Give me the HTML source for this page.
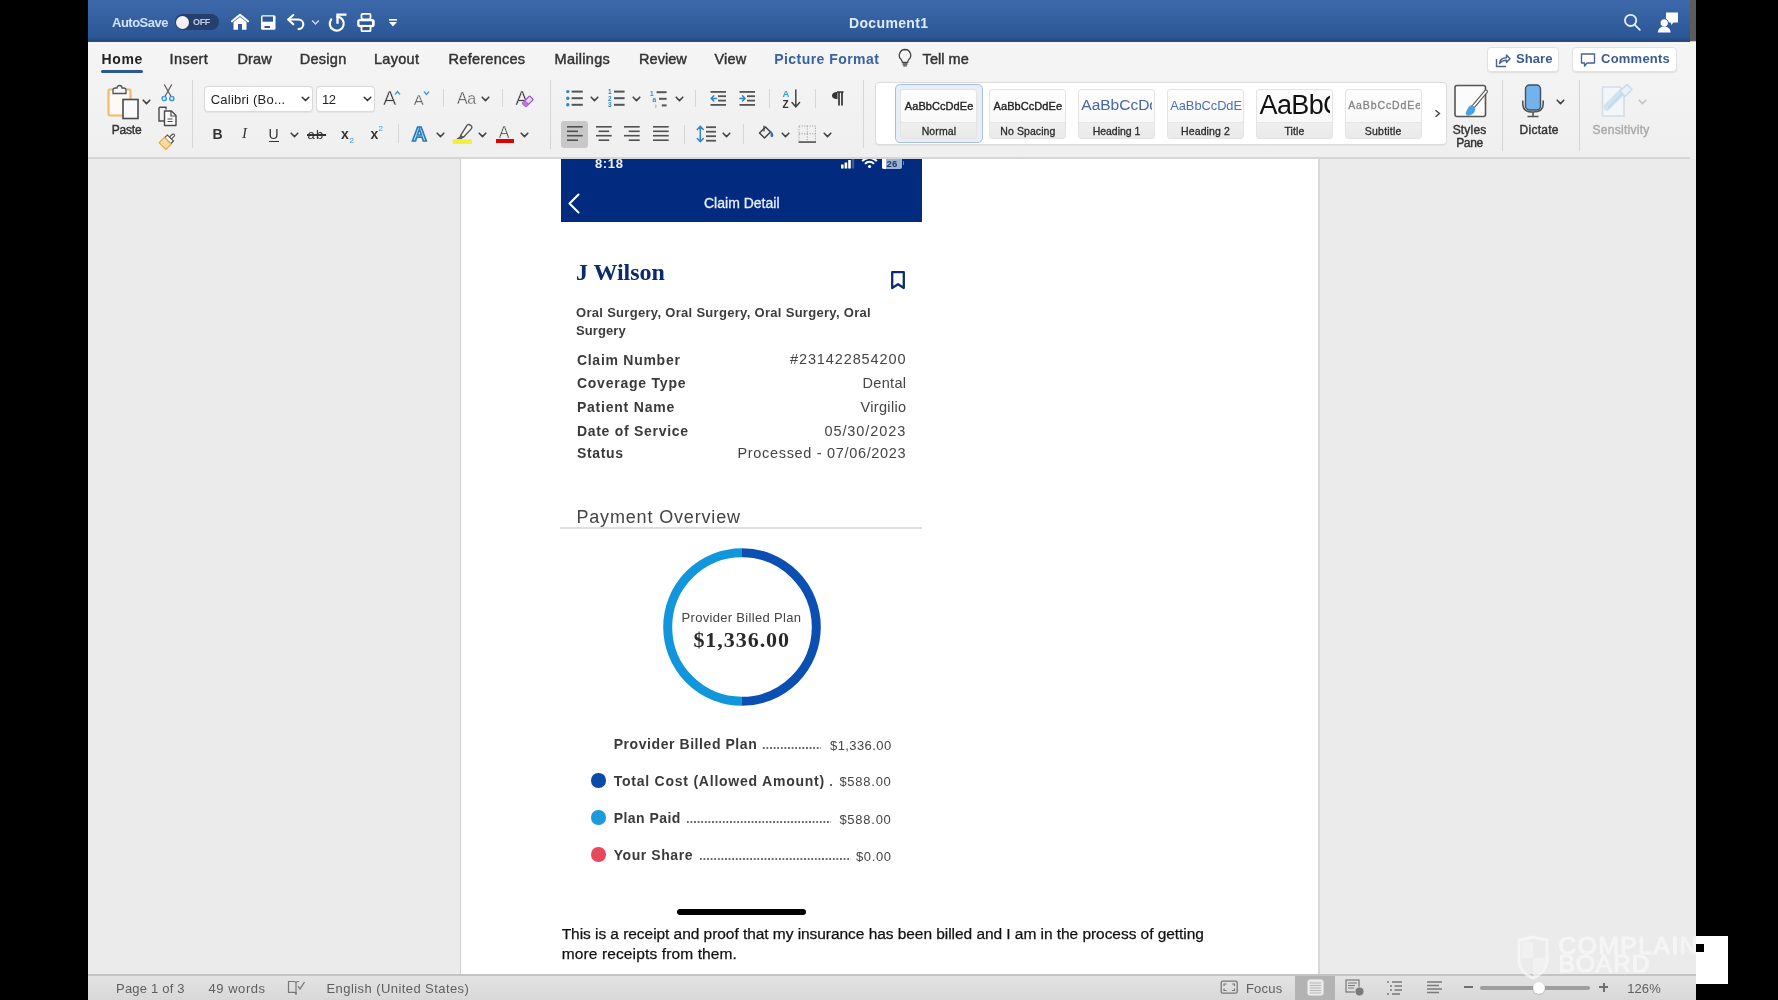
<!DOCTYPE html>
<html><head><meta charset="utf-8">
<style>
*{margin:0;padding:0;box-sizing:border-box}
html,body{width:1778px;height:1000px;overflow:hidden;background:#000;font-family:"Liberation Sans",sans-serif;position:relative}
.a{position:absolute}
.t{position:absolute;white-space:nowrap}
svg.a{overflow:visible}
</style></head>
<body><div id="root" style="position:absolute;left:0;top:0;width:1778px;height:1000px;will-change:transform">
<div class="a" style="left:88px;top:0px;width:1602px;height:42px;background:linear-gradient(#3d69ab,#2c5796 88%,#27487c 97%,#3b4a6a)"></div>
<div class="a" style="left:1690px;top:0px;width:6px;height:41px;background:#5c5c5c"></div>
<div class="a" style="left:1690px;top:41px;width:6px;height:8px;background:#cfc9c4"></div>
<div class="a" style="left:88px;top:42px;width:1608px;height:117px;background:linear-gradient(#f5f5f5,#efefef)"></div>
<div class="a" style="left:88px;top:157px;width:1602px;height:2px;background:#d6d6d6"></div>
<div class="a" style="left:88px;top:159px;width:1608px;height:816px;background:#ebebeb"></div>
<div class="a" style="left:460px;top:159px;width:1px;height:816px;background:#d0d0d0"></div>
<div class="a" style="left:461px;top:159px;width:857px;height:816px;background:#fff"></div>
<div class="a" style="left:1318px;top:159px;width:2px;height:816px;background:#d8d8d8"></div>
<div class="a" style="left:88px;top:974px;width:1608px;height:26px;background:linear-gradient(#e4e4e4,#d8d8d8)"></div>
<div class="a" style="left:88px;top:974px;width:1608px;height:2px;background:#c4c4c4"></div>
<div class="t" style="left:112.00px;top:16.00px;font-size:13px;line-height:13px;font-family:'Liberation Sans',sans-serif;font-weight:bold;font-style:normal;color:#d2e2fc;letter-spacing:-0.496px;">AutoSave</div>
<div class="a" style="left:175px;top:14px;width:44px;height:16px;background:#25406f;border-radius:8px"></div>
<div class="a" style="left:176px;top:15.5px;width:13px;height:13px;background:#f4f2f4;border-radius:50%"></div>
<div class="t" style="left:193.00px;top:17.88px;font-size:9px;line-height:9px;font-family:'Liberation Sans',sans-serif;font-weight:bold;font-style:normal;color:#c3d0e6;letter-spacing:-0.333px;">OFF</div>
<svg class="a" style="left:230px;top:13px;" width="20" height="18" viewBox="0 0 20 18"><path d="M2 8.3 L10 1.8 L18 8.3" fill="none" stroke="#fff" stroke-width="2.1" stroke-linejoin="round" stroke-linecap="round"/><path d="M3.5 9 L10 4 L16.5 9 V16.8 H12 V11 H8 V16.8 H3.5 Z" fill="#fff"/></svg>
<svg class="a" style="left:259px;top:13px;" width="18" height="18" viewBox="0 0 18 18"><rect x="2" y="2.2" width="14.5" height="14.5" rx="1.5" fill="#fff"/><rect x="3.5" y="3.5" width="10.5" height="5.2" fill="#2d5897"/><rect x="5.5" y="13" width="5.5" height="2" fill="#2d5897"/></svg>
<svg class="a" style="left:287px;top:13px;" width="19" height="18" viewBox="0 0 19 18"><path d="M1.5 6.5 H11.5 A4.8 4.8 0 0 1 11.5 16.1" fill="none" stroke="#fff" stroke-width="2.1" stroke-linecap="round"/><path d="M6.3 2 L1.2 6.5 L6.3 11.3" fill="none" stroke="#fff" stroke-width="2.1" stroke-linecap="round" stroke-linejoin="round"/></svg>
<svg class="a" style="left:311px;top:19px;" width="9" height="7" viewBox="0 0 9 7"><path d="M1.2 1.5 L4.5 5 L7.8 1.5" fill="none" stroke="#c9d6ee" stroke-width="1.5"/></svg>
<svg class="a" style="left:328px;top:13px;" width="19" height="19" viewBox="0 0 19 19"><path d="M3.2 6.3 A7 7 0 1 0 9.3 3.6" fill="none" stroke="#fff" stroke-width="2.2" stroke-linecap="round"/><path d="M9.5 9.5 V1.6 H17.3" fill="none" stroke="#fff" stroke-width="2.3" stroke-linecap="square"/></svg>
<svg class="a" style="left:356px;top:12px;" width="20" height="20" viewBox="0 0 20 20"><rect x="5.5" y="1.8" width="9" height="5.5" rx="1.2" fill="none" stroke="#fff" stroke-width="1.8"/><rect x="1.2" y="7" width="17.5" height="8.2" rx="2.6" fill="#fff"/><rect x="3.5" y="9.3" width="12.5" height="3.6" fill="#2d5897"/><rect x="5.5" y="14.2" width="9" height="5" rx="0.8" fill="#2d5897" stroke="#fff" stroke-width="1.8"/></svg>
<svg class="a" style="left:388px;top:18px;" width="10" height="10" viewBox="0 0 10 10"><rect x="1" y="1" width="8" height="1.6" fill="#fff"/><path d="M1 4 H9 L5 8.5 Z" fill="#fff"/></svg>
<div class="t" style="left:849.00px;top:16.15px;font-size:14px;line-height:14px;font-family:'Liberation Sans',sans-serif;font-weight:bold;font-style:normal;color:#e2eafa;letter-spacing:0.355px;">Document1</div>
<svg class="a" style="left:1622px;top:12px;" width="20" height="20" viewBox="0 0 20 20"><circle cx="8.6" cy="8.4" r="5.6" fill="none" stroke="#e6eefc" stroke-width="1.8"/><path d="M12.6 12.6 L17.8 17.8" stroke="#e6eefc" stroke-width="1.9" stroke-linecap="round"/></svg>
<svg class="a" style="left:1657px;top:11px;" width="22" height="22" viewBox="0 0 22 22"><path d="M9 1.5 H21 V11.5 H16.5 L14 14 V11.5 H9 Z" fill="#fff"/><circle cx="7.2" cy="12" r="4.2" fill="#fff" stroke="#2d5897" stroke-width="1"/><path d="M0.8 21.5 C1.2 17 4 15.8 7.2 15.8 C10.4 15.8 13.2 17 13.6 21.5 Z" fill="#fff"/></svg>
<div class="t" style="left:101.60px;top:52.45px;font-size:14px;line-height:14px;font-family:'Liberation Sans',sans-serif;font-weight:bold;font-style:normal;color:#222;letter-spacing:0.627px;">Home</div>
<div class="t" style="left:169.60px;top:52.03px;font-size:14.5px;line-height:14.5px;font-family:'Liberation Sans',sans-serif;font-weight:normal;font-style:normal;color:#333;letter-spacing:0.406px;-webkit-text-stroke:0.45px #333;">Insert</div>
<div class="t" style="left:237.50px;top:52.03px;font-size:14.5px;line-height:14.5px;font-family:'Liberation Sans',sans-serif;font-weight:normal;font-style:normal;color:#333;letter-spacing:0.143px;-webkit-text-stroke:0.45px #333;">Draw</div>
<div class="t" style="left:299.70px;top:52.03px;font-size:14.5px;line-height:14.5px;font-family:'Liberation Sans',sans-serif;font-weight:normal;font-style:normal;color:#333;letter-spacing:0.279px;-webkit-text-stroke:0.45px #333;">Design</div>
<div class="t" style="left:374.00px;top:52.03px;font-size:14.5px;line-height:14.5px;font-family:'Liberation Sans',sans-serif;font-weight:normal;font-style:normal;color:#333;letter-spacing:0.295px;-webkit-text-stroke:0.45px #333;">Layout</div>
<div class="t" style="left:448.60px;top:52.03px;font-size:14.5px;line-height:14.5px;font-family:'Liberation Sans',sans-serif;font-weight:normal;font-style:normal;color:#333;letter-spacing:0.256px;-webkit-text-stroke:0.45px #333;">References</div>
<div class="t" style="left:554.60px;top:52.03px;font-size:14.5px;line-height:14.5px;font-family:'Liberation Sans',sans-serif;font-weight:normal;font-style:normal;color:#333;letter-spacing:0.291px;-webkit-text-stroke:0.45px #333;">Mailings</div>
<div class="t" style="left:639.00px;top:52.03px;font-size:14.5px;line-height:14.5px;font-family:'Liberation Sans',sans-serif;font-weight:normal;font-style:normal;color:#333;letter-spacing:0.045px;-webkit-text-stroke:0.45px #333;">Review</div>
<div class="t" style="left:714.50px;top:52.03px;font-size:14.5px;line-height:14.5px;font-family:'Liberation Sans',sans-serif;font-weight:normal;font-style:normal;color:#333;letter-spacing:0.211px;-webkit-text-stroke:0.45px #333;">View</div>
<div class="t" style="left:922.60px;top:52.03px;font-size:14.5px;line-height:14.5px;font-family:'Liberation Sans',sans-serif;font-weight:normal;font-style:normal;color:#333;letter-spacing:0.040px;-webkit-text-stroke:0.45px #333;">Tell me</div>
<div class="t" style="left:774.20px;top:52.45px;font-size:14px;line-height:14px;font-family:'Liberation Sans',sans-serif;font-weight:bold;font-style:normal;color:#3862a3;letter-spacing:0.451px;">Picture Format</div>
<div class="a" style="left:101px;top:70px;width:42px;height:3px;background:#2b5797;border-radius:2px"></div>
<svg class="a" style="left:897px;top:48px;" width="16" height="20" viewBox="0 0 16 20"><path d="M8 1.5 A5.8 5.8 0 0 0 4.2 11.6 C5 12.5 5.3 13.3 5.3 14.3 H10.7 C10.7 13.3 11 12.5 11.8 11.6 A5.8 5.8 0 0 0 8 1.5 Z" fill="none" stroke="#444" stroke-width="1.3"/><path d="M5.5 16 H10.5 M6.2 17.8 H9.8" stroke="#444" stroke-width="1.3"/></svg>
<div class="a" style="left:1487px;top:47px;width:72px;height:25px;background:#fff;border:1px solid #e2e2e2;border-radius:4px;box-shadow:0 1px 1px rgba(0,0,0,0.08)"></div>
<div class="a" style="left:1572px;top:47px;width:105px;height:25px;background:#fff;border:1px solid #e2e2e2;border-radius:4px;box-shadow:0 1px 1px rgba(0,0,0,0.08)"></div>
<svg class="a" style="left:1495px;top:52px;" width="16" height="16" viewBox="0 0 16 16"><path d="M1.5 7 V14.5 H11" fill="none" stroke="#4a6391" stroke-width="1.4"/><path d="M4.5 11.5 C5 7.5 8 5.8 11.5 5.8 V3 L15 6.8 L11.5 10.5 V8.2 C8.5 8.2 6.3 9.2 4.5 11.5 Z" fill="none" stroke="#4a6391" stroke-width="1.4" stroke-linejoin="round"/></svg>
<div class="t" style="left:1516.00px;top:52.30px;font-size:13px;line-height:13px;font-family:'Liberation Sans',sans-serif;font-weight:bold;font-style:normal;color:#3c5a90;letter-spacing:0.092px;">Share</div>
<svg class="a" style="left:1580px;top:52px;" width="16" height="16" viewBox="0 0 16 16"><path d="M1.5 2 H14.5 V11 H7 L4.5 14 V11 H1.5 Z" fill="none" stroke="#4a6391" stroke-width="1.4" stroke-linejoin="round"/></svg>
<div class="t" style="left:1601.00px;top:52.30px;font-size:13px;line-height:13px;font-family:'Liberation Sans',sans-serif;font-weight:bold;font-style:normal;color:#3c5a90;letter-spacing:0.239px;">Comments</div>
<svg class="a" style="left:106px;top:84px;" width="34" height="36" viewBox="0 0 34 36"><rect x="2.5" y="5.5" width="22" height="26" rx="1" fill="#fdfaf5" stroke="#f4b96a" stroke-width="2.2"/><path d="M7 9.5 V6 C7 4.5 8 4 9.5 4 H11 C11 2 12.5 1.5 13.5 1.5 C14.5 1.5 16 2 16 4 H17.5 C19 4 20 4.5 20 6 V9.5 Z" fill="#f7f7f7" stroke="#555" stroke-width="1.3"/><rect x="17" y="15.5" width="15" height="19" fill="#f9f9fb" stroke="#4a4a4a" stroke-width="1.6"/></svg>
<svg class="a" style="left:142px;top:98.5px;" width="9" height="7" viewBox="0 0 9 7"><path d="M1.2 1.2 L4.5 4.6 L7.8 1.2" fill="none" stroke="#454545" stroke-width="1.6" stroke-linecap="round" stroke-linejoin="round"/></svg>
<div class="t" style="left:111.80px;top:124.24px;font-size:12px;line-height:12px;font-family:'Liberation Sans',sans-serif;font-weight:normal;font-style:normal;color:#333;letter-spacing:-0.214px;-webkit-text-stroke:0.4px #333;">Paste</div>
<svg class="a" style="left:160px;top:83px;" width="16" height="19" viewBox="0 0 16 19"><path d="M4.3 1.5 L10.8 13 M11.7 1.5 L5.2 13" stroke="#555" stroke-width="1.2"/><circle cx="4.2" cy="15.5" r="2.1" fill="none" stroke="#3d9ad6" stroke-width="1.5"/><circle cx="11.8" cy="15.5" r="2.1" fill="none" stroke="#3d9ad6" stroke-width="1.5"/></svg>
<svg class="a" style="left:158px;top:106px;" width="20" height="21" viewBox="0 0 20 21"><path d="M8 3.5 V1.3 H2 C1.4 1.3 1 1.7 1 2.3 V15 H6" fill="none" stroke="#4a4a4a" stroke-width="1.4"/><path d="M6.5 5 H13.5 L18 9.5 V19.5 H6.5 Z" fill="#fbfbfb" stroke="#4a4a4a" stroke-width="1.4" stroke-linejoin="round"/><path d="M13 5 V10 H18" fill="none" stroke="#4a4a4a" stroke-width="1.2"/><path d="M9.5 13 H14.5 M9.5 15.5 H14.5" stroke="#4a4a4a" stroke-width="1"/></svg>
<svg class="a" style="left:157px;top:130px;" width="22" height="21" viewBox="0 0 22 21"><g transform="translate(11 10.5) scale(0.86) rotate(45) translate(-11 -9.5)"><rect x="9.5" y="-0.5" width="3" height="6.5" rx="1.2" fill="#fff" stroke="#4a4a4a" stroke-width="1.3"/><rect x="6" y="5.5" width="10" height="4.5" fill="#f6f6f6" stroke="#4a4a4a" stroke-width="1.3"/><path d="M5.5 10 H16.5 V18.5 H5.5 Z" fill="#fbe0b0" stroke="#f0a540" stroke-width="1.4"/><path d="M9 12 V18 M13 12 V18" stroke="#f7c77a" stroke-width="1"/></g></svg>
<div class="a" style="left:191.5px;top:80px;width:1px;height:68px;background:#d6d6d6"></div>
<div class="a" style="left:204px;top:85.5px;width:108.5px;height:26px;background:#fff;border:1px solid #d9d9d9;border-radius:4px;box-shadow:0 0.5px 1px rgba(0,0,0,0.06)"></div>
<div class="a" style="left:316px;top:85.5px;width:59px;height:26px;background:#fff;border:1px solid #d9d9d9;border-radius:4px;box-shadow:0 0.5px 1px rgba(0,0,0,0.06)"></div>
<div class="t" style="left:210.70px;top:93.20px;font-size:13px;line-height:13px;font-family:'Liberation Sans',sans-serif;font-weight:normal;font-style:normal;color:#222;letter-spacing:0.233px;">Calibri (Bo...</div>
<div class="t" style="left:322.00px;top:93.20px;font-size:13px;line-height:13px;font-family:'Liberation Sans',sans-serif;font-weight:normal;font-style:normal;color:#222;letter-spacing:-0.434px;">12</div>
<svg class="a" style="left:301px;top:96px;" width="9" height="7" viewBox="0 0 9 7"><path d="M1.2 1.2 L4.5 4.6 L7.8 1.2" fill="none" stroke="#333" stroke-width="1.5" stroke-linecap="round" stroke-linejoin="round"/></svg>
<svg class="a" style="left:363px;top:96px;" width="9" height="7" viewBox="0 0 9 7"><path d="M1.2 1.2 L4.5 4.6 L7.8 1.2" fill="none" stroke="#333" stroke-width="1.5" stroke-linecap="round" stroke-linejoin="round"/></svg>
<div class="t" style="left:383.00px;top:87.87px;font-size:20px;line-height:20px;font-family:'Liberation Sans',sans-serif;font-weight:normal;font-style:normal;color:#404040;-webkit-text-stroke:0.5px #f0f0f0;">A</div>
<svg class="a" style="left:394px;top:90px;" width="7" height="6" viewBox="0 0 7 6"><path d="M1 4.5 L3.5 1.5 L6 4.5" fill="none" stroke="#3a9ad8" stroke-width="1.3"/></svg>
<div class="t" style="left:413.80px;top:92.10px;font-size:15px;line-height:15px;font-family:'Liberation Sans',sans-serif;font-weight:normal;font-style:normal;color:#404040;-webkit-text-stroke:0.4px #f0f0f0;">A</div>
<svg class="a" style="left:423px;top:90px;" width="7" height="6" viewBox="0 0 7 6"><path d="M1 1.5 L3.5 4.5 L6 1.5" fill="none" stroke="#3a9ad8" stroke-width="1.3"/></svg>
<div class="a" style="left:443px;top:89px;width:1px;height:18px;background:#d6d6d6"></div>
<div class="t" style="left:457.00px;top:91.26px;font-size:16px;line-height:16px;font-family:'Liberation Sans',sans-serif;font-weight:normal;font-style:normal;color:#404040;letter-spacing:-0.539px;-webkit-text-stroke:0.4px #f0f0f0;">Aa</div>
<svg class="a" style="left:481px;top:96px;" width="9" height="7" viewBox="0 0 9 7"><path d="M1.2 1.2 L4.5 4.6 L7.8 1.2" fill="none" stroke="#454545" stroke-width="1.6" stroke-linecap="round" stroke-linejoin="round"/></svg>
<div class="a" style="left:501.5px;top:89px;width:1px;height:18px;background:#d6d6d6"></div>
<div class="t" style="left:515.30px;top:87.67px;font-size:20px;line-height:20px;font-family:'Liberation Sans',sans-serif;font-weight:normal;font-style:normal;color:#404040;-webkit-text-stroke:0.5px #f0f0f0;">A</div>
<svg class="a" style="left:521px;top:95px;" width="13" height="13" viewBox="0 0 13 13"><g transform="rotate(-45 6.5 6.5)"><rect x="1.5" y="4" width="10.5" height="5.2" rx="0.8" fill="#ead6f6" stroke="#9a55c8" stroke-width="1.3"/><path d="M5 4 V9.2" stroke="#9a55c8" stroke-width="1.2"/><rect x="1.5" y="4" width="3.5" height="5.2" fill="#b77ad9"/></g></svg>
<div class="t" style="left:212.50px;top:126.75px;font-size:14px;line-height:14px;font-family:'Liberation Sans',sans-serif;font-weight:bold;font-style:normal;color:#333;">B</div>
<div class="t" style="left:242.00px;top:126.04px;font-size:15px;line-height:15px;font-family:'Liberation Serif',serif;font-weight:normal;font-style:italic;color:#333;">I</div>
<div class="t" style="left:268.50px;top:126.75px;font-size:14px;line-height:14px;font-family:'Liberation Sans',sans-serif;font-weight:normal;font-style:normal;color:#333;">U</div>
<div class="a" style="left:268.5px;top:140.5px;width:10.5px;height:1.2px;background:#333"></div>
<svg class="a" style="left:290px;top:132px;" width="9" height="7" viewBox="0 0 9 7"><path d="M1.2 1.2 L4.5 4.6 L7.8 1.2" fill="none" stroke="#454545" stroke-width="1.6" stroke-linecap="round" stroke-linejoin="round"/></svg>
<div class="t" style="left:307.50px;top:127.60px;font-size:13px;line-height:13px;font-family:'Liberation Sans',sans-serif;font-weight:normal;font-style:normal;color:#333;letter-spacing:1.266px;">ab</div>
<div class="a" style="left:306.5px;top:134.3px;width:19px;height:1.3px;background:#333"></div>
<div class="t" style="left:341.00px;top:127.15px;font-size:14px;line-height:14px;font-family:'Liberation Sans',sans-serif;font-weight:bold;font-style:normal;color:#333;">x</div>
<div class="t" style="left:349.50px;top:136.73px;font-size:8px;line-height:8px;font-family:'Liberation Sans',sans-serif;font-weight:normal;font-style:normal;color:#3a9ad8;">2</div>
<div class="t" style="left:370.50px;top:127.15px;font-size:14px;line-height:14px;font-family:'Liberation Sans',sans-serif;font-weight:bold;font-style:normal;color:#333;">x</div>
<div class="t" style="left:378.50px;top:124.73px;font-size:8px;line-height:8px;font-family:'Liberation Sans',sans-serif;font-weight:normal;font-style:normal;color:#3a9ad8;">2</div>
<div class="a" style="left:397.5px;top:124px;width:1px;height:19px;background:#d6d6d6"></div>
<div class="t" style="left:412.00px;top:123.85px;font-size:20.5px;line-height:20.5px;font-family:'Liberation Sans',sans-serif;font-weight:bold;font-style:normal;color:#c9ebfc;-webkit-text-stroke:1.7px #2a7cbc;">A</div>
<svg class="a" style="left:436px;top:131.5px;" width="9" height="7" viewBox="0 0 9 7"><path d="M1.2 1.2 L4.5 4.6 L7.8 1.2" fill="none" stroke="#454545" stroke-width="1.6" stroke-linecap="round" stroke-linejoin="round"/></svg>
<svg class="a" style="left:452px;top:124px;" width="21" height="21" viewBox="0 0 21 21"><g transform="translate(0.5,-1.8)"><path d="M8 13.5 L14.5 3.2 C15.2 2.2 16.5 2 17.4 2.7 L18.6 3.6 C19.5 4.3 19.6 5.6 18.9 6.4 L11 15 Z" fill="#f7f7f7" stroke="#555" stroke-width="1.4" stroke-linejoin="round"/><path d="M8 13.5 L11 15 L9 17 L3.5 17 Z" fill="#5a5a5a"/></g><rect x="0.5" y="15.3" width="19.5" height="4.6" rx="1.5" fill="#f4ee3c"/></svg>
<svg class="a" style="left:477.5px;top:131.5px;" width="9" height="7" viewBox="0 0 9 7"><path d="M1.2 1.2 L4.5 4.6 L7.8 1.2" fill="none" stroke="#454545" stroke-width="1.6" stroke-linecap="round" stroke-linejoin="round"/></svg>
<div class="t" style="left:498.80px;top:124.86px;font-size:16px;line-height:16px;font-family:'Liberation Sans',sans-serif;font-weight:normal;font-style:normal;color:#404040;-webkit-text-stroke:0.4px #f0f0f0;">A</div>
<div class="a" style="left:495.5px;top:139.2px;width:18px;height:4.2px;background:#e00000"></div>
<svg class="a" style="left:520px;top:131.5px;" width="9" height="7" viewBox="0 0 9 7"><path d="M1.2 1.2 L4.5 4.6 L7.8 1.2" fill="none" stroke="#454545" stroke-width="1.6" stroke-linecap="round" stroke-linejoin="round"/></svg>
<div class="a" style="left:549.5px;top:80px;width:1px;height:69px;background:#d6d6d6"></div>
<svg class="a" style="left:565.5px;top:90px;" width="17" height="17" viewBox="0 0 17 17"><circle cx="1.8" cy="1.6" r="1.7" fill="#2f86c6"/><rect x="5.6" y="0.6" width="11.2" height="2" fill="#555"/><circle cx="1.8" cy="8.2" r="1.7" fill="#2f86c6"/><rect x="5.6" y="7.199999999999999" width="11.2" height="2" fill="#555"/><circle cx="1.8" cy="14.799999999999999" r="1.7" fill="#2f86c6"/><rect x="5.6" y="13.799999999999999" width="11.2" height="2" fill="#555"/></svg>
<svg class="a" style="left:590px;top:96px;" width="9" height="7" viewBox="0 0 9 7"><path d="M1.2 1.2 L4.5 4.6 L7.8 1.2" fill="none" stroke="#454545" stroke-width="1.6" stroke-linecap="round" stroke-linejoin="round"/></svg>
<svg class="a" style="left:607.5px;top:89px;" width="17" height="19" viewBox="0 0 17 19"><text x="0" y="5" font-size="6.5" font-family="Liberation Sans" fill="#2f86c6" font-weight="bold">1</text><rect x="6" y="1.6" width="10.6" height="2" fill="#555"/><text x="0" y="11.6" font-size="6.5" font-family="Liberation Sans" fill="#2f86c6" font-weight="bold">2</text><rect x="6" y="8.2" width="10.6" height="2" fill="#555"/><text x="0" y="18.2" font-size="6.5" font-family="Liberation Sans" fill="#2f86c6" font-weight="bold">3</text><rect x="6" y="14.799999999999999" width="10.6" height="2" fill="#555"/></svg>
<svg class="a" style="left:632px;top:96px;" width="9" height="7" viewBox="0 0 9 7"><path d="M1.2 1.2 L4.5 4.6 L7.8 1.2" fill="none" stroke="#454545" stroke-width="1.6" stroke-linecap="round" stroke-linejoin="round"/></svg>
<svg class="a" style="left:650px;top:89px;" width="17" height="20" viewBox="0 0 17 20"><text x="0" y="6.6" font-size="6.5" font-family="Liberation Sans" fill="#2f86c6" font-weight="bold">1</text><rect x="6.6" y="2.2" width="10" height="2" fill="#555"/><text x="2.5" y="13.2" font-size="6.5" font-family="Liberation Sans" fill="#2f86c6" font-weight="bold">a</text><rect x="9" y="8.8" width="7.6" height="2" fill="#555"/><text x="5.2" y="19" font-size="6" font-family="Liberation Sans" fill="#2f86c6">i</text><rect x="11.8" y="15.4" width="4.8" height="2" fill="#555"/></svg>
<svg class="a" style="left:674.5px;top:96px;" width="9" height="7" viewBox="0 0 9 7"><path d="M1.2 1.2 L4.5 4.6 L7.8 1.2" fill="none" stroke="#454545" stroke-width="1.6" stroke-linecap="round" stroke-linejoin="round"/></svg>
<div class="a" style="left:694.5px;top:90px;width:1px;height:17px;background:#d6d6d6"></div>
<svg class="a" style="left:709.8px;top:90.8px;" width="17" height="15" viewBox="0 0 17 15"><rect x="0.5" y="0" width="15.5" height="1.8" fill="#555"/><rect x="0.5" y="13" width="15.5" height="1.8" fill="#555"/><rect x="8" y="4.3" width="8" height="1.8" fill="#555"/><rect x="8" y="8.7" width="8" height="1.8" fill="#555"/><path d="M6.5 7.4 H1.2 M3.8 4.8 L1.2 7.4 L3.8 10" fill="none" stroke="#2f86c6" stroke-width="1.5" stroke-linecap="round"/></svg>
<svg class="a" style="left:738.6px;top:90.8px;" width="17" height="15" viewBox="0 0 17 15"><rect x="0.5" y="0" width="15.5" height="1.8" fill="#555"/><rect x="0.5" y="13" width="15.5" height="1.8" fill="#555"/><rect x="8" y="4.3" width="8" height="1.8" fill="#555"/><rect x="8" y="8.7" width="8" height="1.8" fill="#555"/><path d="M0.8 7.4 H6 M3.5 4.8 L6 7.4 L3.5 10" fill="none" stroke="#2f86c6" stroke-width="1.5" stroke-linecap="round"/></svg>
<div class="a" style="left:769px;top:89px;width:1px;height:19px;background:#d6d6d6"></div>
<svg class="a" style="left:782px;top:89px;" width="21" height="20" viewBox="0 0 21 20"><text x="0.5" y="8.2" font-size="9.5" font-family="Liberation Sans" fill="#3a9ad8" font-weight="bold">A</text><text x="0.5" y="18.5" font-size="10" font-family="Liberation Sans" fill="#333" font-weight="bold">Z</text><path d="M13.8 1 V17.5 M10 13.5 L13.8 17.8 L17.6 13.5" fill="none" stroke="#444" stroke-width="1.5" stroke-linecap="round"/></svg>
<div class="a" style="left:815px;top:89px;width:1px;height:19px;background:#d6d6d6"></div>
<svg class="a" style="left:831px;top:91px;" width="13" height="15" viewBox="0 0 13 15"><path d="M6 1 H12.5 M8 1 V14.5 M11 1 V14.5" stroke="#333" stroke-width="1.7"/><path d="M6.5 1 C2.5 1 1 2.8 1 4.6 C1 6.6 2.5 8.2 6.5 8.2 Z" fill="#333"/></svg>
<div class="a" style="left:862.5px;top:80px;width:1px;height:68px;background:#d6d6d6"></div>
<div class="a" style="left:561px;top:121px;width:27px;height:26.5px;background:#c8c8c8;border-radius:3px"></div>
<svg class="a" style="left:566.7px;top:126.2px;" width="16" height="16" viewBox="0 0 16 16"><rect x="0" y="0" width="15.7" height="1.6" fill="#505050"/><rect x="0" y="4.5" width="11" height="1.6" fill="#505050"/><rect x="0" y="8.9" width="15.7" height="1.6" fill="#505050"/><rect x="0" y="13.4" width="11" height="1.6" fill="#505050"/></svg>
<svg class="a" style="left:595.5px;top:126.2px;" width="16" height="16" viewBox="0 0 16 16"><rect x="0" y="0" width="15.7" height="1.6" fill="#505050"/><rect x="2.5" y="4.5" width="10.7" height="1.6" fill="#505050"/><rect x="0" y="8.9" width="15.7" height="1.6" fill="#505050"/><rect x="2.5" y="13.4" width="10.7" height="1.6" fill="#505050"/></svg>
<svg class="a" style="left:624.4px;top:126.2px;" width="16" height="16" viewBox="0 0 16 16"><rect x="0" y="0" width="15.7" height="1.6" fill="#505050"/><rect x="4.7" y="4.5" width="11" height="1.6" fill="#505050"/><rect x="0" y="8.9" width="15.7" height="1.6" fill="#505050"/><rect x="4.7" y="13.4" width="11" height="1.6" fill="#505050"/></svg>
<svg class="a" style="left:653.2px;top:126.2px;" width="16" height="16" viewBox="0 0 16 16"><rect x="0" y="0" width="15.7" height="1.6" fill="#505050"/><rect x="0" y="4.5" width="15.7" height="1.6" fill="#505050"/><rect x="0" y="8.9" width="15.7" height="1.6" fill="#505050"/><rect x="0" y="13.4" width="15.7" height="1.6" fill="#505050"/></svg>
<div class="a" style="left:683.8px;top:124.5px;width:1px;height:19.5px;background:#d6d6d6"></div>
<svg class="a" style="left:696px;top:125px;" width="21" height="18" viewBox="0 0 21 18"><path d="M4.3 1.5 V16.5 M1.3 4.5 L4.3 1.3 L7.3 4.5 M1.3 13.5 L4.3 16.7 L7.3 13.5" fill="none" stroke="#2f86c6" stroke-width="1.5" stroke-linecap="round"/><rect x="10" y="1.3" width="10" height="1.8" fill="#555"/><rect x="10" y="5.8" width="10" height="1.8" fill="#555"/><rect x="10" y="10.3" width="10" height="1.8" fill="#555"/><rect x="10" y="14.8" width="10" height="1.8" fill="#555"/></svg>
<svg class="a" style="left:722.3px;top:131.5px;" width="9" height="7" viewBox="0 0 9 7"><path d="M1.2 1.2 L4.5 4.6 L7.8 1.2" fill="none" stroke="#454545" stroke-width="1.6" stroke-linecap="round" stroke-linejoin="round"/></svg>
<div class="a" style="left:742.9px;top:124.3px;width:1px;height:19.299999999999997px;background:#d6d6d6"></div>
<svg class="a" style="left:758px;top:125px;" width="17" height="15" viewBox="0 0 17 15"><path d="M1.5 8 L7.5 2 L12.5 7 L6.5 13 Z" fill="none" stroke="#444" stroke-width="1.5" stroke-linejoin="round"/><path d="M6 0.8 V6.5" stroke="#444" stroke-width="1.3"/><path d="M12.5 5.5 C14.8 7.5 15.3 9.2 15.3 10.5 C15.3 11.6 14.5 12 13.8 12 C13 12 12.3 11.4 12.6 10" fill="#2f6fb0"/></svg>
<svg class="a" style="left:781px;top:131.5px;" width="9" height="7" viewBox="0 0 9 7"><path d="M1.2 1.2 L4.5 4.6 L7.8 1.2" fill="none" stroke="#454545" stroke-width="1.6" stroke-linecap="round" stroke-linejoin="round"/></svg>
<svg class="a" style="left:798px;top:124.5px;" width="19" height="19" viewBox="0 0 19 19"><rect x="1" y="1" width="16.5" height="15.5" fill="none" stroke="#9a9a9a" stroke-width="0.9" stroke-dasharray="1.2 1.4"/><path d="M9.25 1 V16.5 M1 8.75 H17.5" stroke="#9a9a9a" stroke-width="0.9" stroke-dasharray="1.2 1.4"/><rect x="0.5" y="16.2" width="17.5" height="1.8" fill="#666"/></svg>
<svg class="a" style="left:823.2px;top:131.5px;" width="9" height="7" viewBox="0 0 9 7"><path d="M1.2 1.2 L4.5 4.6 L7.8 1.2" fill="none" stroke="#454545" stroke-width="1.6" stroke-linecap="round" stroke-linejoin="round"/></svg>
<div class="a" style="left:874.5px;top:81.5px;width:572.5px;height:63.5px;background:#fff;border:1px solid #dcdcdc;border-radius:4px;box-shadow:0 1px 1px rgba(0,0,0,0.05)"></div>
<div class="a" style="left:895px;top:83.5px;width:88px;height:59.5px;background:#e9eef6;border:1.6px solid #a8bedf;border-radius:5px"></div>
<div class="a" style="left:900.4px;top:88.5px;width:77px;height:50.5px;background:linear-gradient(#fdfdfd,#f7f7f7);border:1px solid #e4e4e4;border-radius:3px;overflow:hidden"></div>
<div class="a" style="left:901.4px;top:122px;width:75px;height:16px;background:linear-gradient(#f0f0f0,#e9e9e9)"></div>
<div class="a" style="left:901.4px;top:121.5px;width:75px;height:1px;background:#e6e6e6"></div>
<div class="t" style="left:921.70px;top:125.61px;font-size:10.5px;line-height:10.5px;font-family:'Liberation Sans',sans-serif;font-weight:normal;font-style:normal;color:#2a2a2a;letter-spacing:0.093px;-webkit-text-stroke:0.3px #2a2a2a;">Normal</div>
<div class="a" style="left:989.4px;top:88.5px;width:77px;height:50.5px;background:linear-gradient(#fdfdfd,#f7f7f7);border:1px solid #e4e4e4;border-radius:3px;overflow:hidden"></div>
<div class="a" style="left:990.4px;top:122px;width:75px;height:16px;background:linear-gradient(#f0f0f0,#e9e9e9)"></div>
<div class="a" style="left:990.4px;top:121.5px;width:75px;height:1px;background:#e6e6e6"></div>
<div class="t" style="left:1000.30px;top:125.61px;font-size:10.5px;line-height:10.5px;font-family:'Liberation Sans',sans-serif;font-weight:normal;font-style:normal;color:#2a2a2a;letter-spacing:0.090px;-webkit-text-stroke:0.3px #2a2a2a;">No Spacing</div>
<div class="a" style="left:1078px;top:88.5px;width:77px;height:50.5px;background:linear-gradient(#fdfdfd,#f7f7f7);border:1px solid #e4e4e4;border-radius:3px;overflow:hidden"></div>
<div class="a" style="left:1079px;top:122px;width:75px;height:16px;background:linear-gradient(#f0f0f0,#e9e9e9)"></div>
<div class="a" style="left:1079px;top:121.5px;width:75px;height:1px;background:#e6e6e6"></div>
<div class="t" style="left:1092.65px;top:125.61px;font-size:10.5px;line-height:10.5px;font-family:'Liberation Sans',sans-serif;font-weight:normal;font-style:normal;color:#2a2a2a;letter-spacing:-0.021px;-webkit-text-stroke:0.3px #2a2a2a;">Heading 1</div>
<div class="a" style="left:1167px;top:88.5px;width:77px;height:50.5px;background:linear-gradient(#fdfdfd,#f7f7f7);border:1px solid #e4e4e4;border-radius:3px;overflow:hidden"></div>
<div class="a" style="left:1168px;top:122px;width:75px;height:16px;background:linear-gradient(#f0f0f0,#e9e9e9)"></div>
<div class="a" style="left:1168px;top:121.5px;width:75px;height:1px;background:#e6e6e6"></div>
<div class="t" style="left:1181.00px;top:125.61px;font-size:10.5px;line-height:10.5px;font-family:'Liberation Sans',sans-serif;font-weight:normal;font-style:normal;color:#2a2a2a;letter-spacing:0.123px;-webkit-text-stroke:0.3px #2a2a2a;">Heading 2</div>
<div class="a" style="left:1256px;top:88.5px;width:77px;height:50.5px;background:linear-gradient(#fdfdfd,#f7f7f7);border:1px solid #e4e4e4;border-radius:3px;overflow:hidden"></div>
<div class="a" style="left:1257px;top:122px;width:75px;height:16px;background:linear-gradient(#f0f0f0,#e9e9e9)"></div>
<div class="a" style="left:1257px;top:121.5px;width:75px;height:1px;background:#e6e6e6"></div>
<div class="t" style="left:1284.40px;top:125.61px;font-size:10.5px;line-height:10.5px;font-family:'Liberation Sans',sans-serif;font-weight:normal;font-style:normal;color:#2a2a2a;letter-spacing:0.152px;-webkit-text-stroke:0.3px #2a2a2a;">Title</div>
<div class="a" style="left:1344.7px;top:88.5px;width:77px;height:50.5px;background:linear-gradient(#fdfdfd,#f7f7f7);border:1px solid #e4e4e4;border-radius:3px;overflow:hidden"></div>
<div class="a" style="left:1345.7px;top:122px;width:75px;height:16px;background:linear-gradient(#f0f0f0,#e9e9e9)"></div>
<div class="a" style="left:1345.7px;top:121.5px;width:75px;height:1px;background:#e6e6e6"></div>
<div class="t" style="left:1364.75px;top:125.61px;font-size:10.5px;line-height:10.5px;font-family:'Liberation Sans',sans-serif;font-weight:normal;font-style:normal;color:#2a2a2a;letter-spacing:0.234px;-webkit-text-stroke:0.3px #2a2a2a;">Subtitle</div>
<div class="t" style="left:904.80px;top:100.69px;font-size:11px;line-height:11px;font-family:'Liberation Sans',sans-serif;font-weight:normal;font-style:normal;color:#222;letter-spacing:0.069px;-webkit-text-stroke:0.35px #222;">AaBbCcDdEe</div>
<div class="t" style="left:993.60px;top:100.69px;font-size:11px;line-height:11px;font-family:'Liberation Sans',sans-serif;font-weight:normal;font-style:normal;color:#222;letter-spacing:0.069px;-webkit-text-stroke:0.35px #222;">AaBbCcDdEe</div>
<div class="a" style="left:1079px;top:92px;width:73px;height:24px;overflow:hidden"><div class="t" style="left:2.30px;top:5.38px;font-size:15.5px;line-height:15.5px;font-family:'Liberation Sans',sans-serif;font-weight:normal;font-style:normal;color:#4765a8;">AaBbCcDdEe</div></div>
<div class="a" style="left:1168px;top:95px;width:74px;height:20px;overflow:hidden"><div class="t" style="left:2.20px;top:4.96px;font-size:12.8px;line-height:12.8px;font-family:'Liberation Sans',sans-serif;font-weight:normal;font-style:normal;color:#4a6fb3;">AaBbCcDdEe</div></div>
<div class="a" style="left:1259px;top:90px;width:71px;height:30px;overflow:hidden"><div class="t" style="left:0.60px;top:1.54px;font-size:27px;line-height:27px;font-family:'Liberation Sans',sans-serif;font-weight:normal;font-style:normal;color:#111;letter-spacing:-0.650px;">AaBbCc</div></div>
<div class="a" style="left:1347px;top:95px;width:73px;height:20px;overflow:hidden"><div class="t" style="left:1.20px;top:4.91px;font-size:10.5px;line-height:10.5px;font-family:'Liberation Sans',sans-serif;font-weight:normal;font-style:normal;color:#858585;letter-spacing:0.900px;-webkit-text-stroke:0.3px #858585;">AaBbCcDdEe</div></div>
<svg class="a" style="left:1434px;top:109px;" width="8" height="9" viewBox="0 0 8 9"><path d="M1.5 1.2 L5.5 4.5 L1.5 7.8" fill="none" stroke="#444" stroke-width="1.4"/></svg>
<svg class="a" style="left:1453px;top:84px;" width="36" height="36" viewBox="0 0 36 36"><rect x="2" y="1.5" width="30.5" height="31" rx="2" fill="#fbfbfb" stroke="#555" stroke-width="1.6"/><path d="M33 7.5 L20 23" stroke="#555" stroke-width="4" stroke-linecap="round"/><path d="M33 7.5 L20 23" stroke="#fff" stroke-width="1.8" stroke-linecap="round"/><path d="M19.5 21 C16 21 15 24 13 28 C12 30 14 32.5 16.5 31.5 C20 30.5 23 27.5 22 23.5 Z" fill="#4ba2e0"/></svg>
<div class="t" style="left:1452.70px;top:124.14px;font-size:12px;line-height:12px;font-family:'Liberation Sans',sans-serif;font-weight:normal;font-style:normal;color:#333;letter-spacing:0.171px;-webkit-text-stroke:0.4px #333;">Styles</div>
<div class="t" style="left:1456.20px;top:137.44px;font-size:12px;line-height:12px;font-family:'Liberation Sans',sans-serif;font-weight:normal;font-style:normal;color:#333;letter-spacing:-0.329px;-webkit-text-stroke:0.4px #333;">Pane</div>
<div class="a" style="left:1501.5px;top:80px;width:1px;height:71px;background:#d6d6d6"></div>
<svg class="a" style="left:1520px;top:84px;" width="27" height="34" viewBox="0 0 27 34"><rect x="5.5" y="1" width="15" height="25" rx="4" fill="#74b3ea" stroke="#3d4f66" stroke-width="1.4"/><path d="M2.8 16.5 V20 C2.8 25.5 7 28 13 28 C19 28 23.2 25.5 23.2 20 V16.5" fill="none" stroke="#555" stroke-width="1.6"/><path d="M13 28 V32.5 M7.5 32.5 H18.5" stroke="#555" stroke-width="1.6"/></svg>
<svg class="a" style="left:1556px;top:98.5px;" width="9" height="7" viewBox="0 0 9 7"><path d="M1.2 1.2 L4.5 4.6 L7.8 1.2" fill="none" stroke="#454545" stroke-width="1.6" stroke-linecap="round" stroke-linejoin="round"/></svg>
<div class="t" style="left:1519.50px;top:124.14px;font-size:12px;line-height:12px;font-family:'Liberation Sans',sans-serif;font-weight:normal;font-style:normal;color:#333;letter-spacing:0.279px;-webkit-text-stroke:0.4px #333;">Dictate</div>
<div class="a" style="left:1578.5px;top:80px;width:1px;height:71px;background:#d6d6d6"></div>
<svg class="a" style="left:1600px;top:83px;" width="34" height="35" viewBox="0 0 34 35"><path d="M2.5 4 H20 L24 8 V33 H2.5 Z" fill="#f3f6f9" stroke="#d5dde6" stroke-width="1.6"/><path d="M7 24 L22 9" stroke="#cfe3f0" stroke-width="7" stroke-linecap="round"/><path d="M8 25 L23 10" stroke="#c2d6e6" stroke-width="1.2"/><path d="M20 8 L27 1.5 L32 6.5 L25 13.5 Z" fill="#e8f1f8" stroke="#c8dbe8" stroke-width="1.4"/></svg>
<svg class="a" style="left:1637.5px;top:98.5px;" width="9" height="7" viewBox="0 0 9 7"><path d="M1.2 1.2 L4.5 4.6 L7.8 1.2" fill="none" stroke="#c4c4c4" stroke-width="1.6" stroke-linecap="round" stroke-linejoin="round"/></svg>
<div class="t" style="left:1592.60px;top:124.14px;font-size:12px;line-height:12px;font-family:'Liberation Sans',sans-serif;font-weight:normal;font-style:normal;color:#a9a9a9;letter-spacing:0.271px;-webkit-text-stroke:0.4px #a9a9a9;">Sensitivity</div>
<div class="a" style="left:561px;top:159px;width:361px;height:62.5px;background:#022a7f"></div>
<div class="t" style="left:595.00px;top:157.00px;font-size:13px;line-height:13px;font-family:'Liberation Sans',sans-serif;font-weight:bold;font-style:normal;color:#eef2fb;letter-spacing:0.642px;">8:18</div>
<svg class="a" style="left:840px;top:159px;overflow:hidden" width="18" height="10" viewBox="0 0 18 10"><rect x="1" y="5.5" width="2.6" height="4" fill="#fff"/><rect x="4.6" y="3.5" width="2.6" height="6" fill="#fff"/><rect x="8.2" y="1" width="2.6" height="8.5" fill="#fff"/><rect x="11.8" y="0" width="2.4" height="9.5" fill="#3d5c9c"/></svg>
<svg class="a" style="left:861px;top:159px;overflow:hidden" width="17" height="10" viewBox="0 0 17 10"><g transform="translate(0,-2.5)"><path d="M1.2 4.6 A10 10 0 0 1 15.8 4.6" fill="none" stroke="#fff" stroke-width="2"/><path d="M4 7.3 A6 6 0 0 1 13 7.3" fill="none" stroke="#fff" stroke-width="2"/><circle cx="8.5" cy="10" r="1.6" fill="#fff"/></g></svg>
<div class="a" style="left:882px;top:159px;width:20px;height:9.5px;background:#9fb2cf;border-radius:0 0 2px 2px"></div>
<div class="a" style="left:882px;top:159px;width:3.5px;height:9.5px;background:#fff;border-radius:0 0 0 2px"></div>
<div class="a" style="left:902.5px;top:161px;width:1.5px;height:4px;background:#6a7fa8"></div>
<div class="t" style="left:886.50px;top:159.46px;font-size:9.5px;line-height:9.5px;font-family:'Liberation Sans',sans-serif;font-weight:bold;font-style:normal;color:#1d3a73;letter-spacing:0.219px;">26</div>
<svg class="a" style="left:566px;top:192px;" width="16" height="23" viewBox="0 0 16 23"><path d="M12.5 2.5 L3.5 11.5 L12.5 20.5" fill="none" stroke="#fff" stroke-width="2.1" stroke-linecap="round" stroke-linejoin="round"/></svg>
<div class="t" style="left:704.00px;top:196.05px;font-size:14px;line-height:14px;font-family:'Liberation Sans',sans-serif;font-weight:normal;font-style:normal;color:#e9eefa;letter-spacing:0.005px;-webkit-text-stroke:0.3px #e9eefa;">Claim Detail</div>
<div class="t" style="left:576.10px;top:259.80px;font-size:24px;line-height:24px;font-family:'Liberation Serif',serif;font-weight:bold;font-style:normal;color:#0b2b6f;letter-spacing:-0.070px;">J Wilson</div>
<svg class="a" style="left:889px;top:269px;" width="18" height="22" viewBox="0 0 18 22"><path d="M3.2 3.2 H14.8 V19 L9 15.2 L3.2 19 Z" fill="none" stroke="#0d2e6e" stroke-width="2.3" stroke-linejoin="round"/></svg>
<div class="t" style="left:576.00px;top:305.80px;font-size:13px;line-height:13px;font-family:'Liberation Sans',sans-serif;font-weight:bold;font-style:normal;color:#3d3d3d;letter-spacing:0.303px;">Oral Surgery, Oral Surgery, Oral Surgery, Oral</div>
<div class="t" style="left:576.00px;top:324.00px;font-size:13px;line-height:13px;font-family:'Liberation Sans',sans-serif;font-weight:bold;font-style:normal;color:#3d3d3d;letter-spacing:0.094px;">Surgery</div>
<div class="t" style="left:576.90px;top:352.55px;font-size:14px;line-height:14px;font-family:'Liberation Sans',sans-serif;font-weight:bold;font-style:normal;color:#3a3a3a;letter-spacing:0.733px;">Claim Number</div>
<div class="t" style="left:790.00px;top:352.13px;font-size:14.5px;line-height:14.5px;font-family:'Liberation Sans',sans-serif;font-weight:normal;font-style:normal;color:#444;letter-spacing:0.884px;">#231422854200</div>
<div class="t" style="left:576.90px;top:376.25px;font-size:14px;line-height:14px;font-family:'Liberation Sans',sans-serif;font-weight:bold;font-style:normal;color:#3a3a3a;letter-spacing:0.777px;">Coverage Type</div>
<div class="t" style="left:862.50px;top:375.83px;font-size:14.5px;line-height:14.5px;font-family:'Liberation Sans',sans-serif;font-weight:normal;font-style:normal;color:#444;letter-spacing:0.316px;">Dental</div>
<div class="t" style="left:576.90px;top:400.05px;font-size:14px;line-height:14px;font-family:'Liberation Sans',sans-serif;font-weight:bold;font-style:normal;color:#3a3a3a;letter-spacing:0.786px;">Patient Name</div>
<div class="t" style="left:860.60px;top:399.63px;font-size:14.5px;line-height:14.5px;font-family:'Liberation Sans',sans-serif;font-weight:normal;font-style:normal;color:#444;letter-spacing:0.308px;">Virgilio</div>
<div class="t" style="left:576.90px;top:424.45px;font-size:14px;line-height:14px;font-family:'Liberation Sans',sans-serif;font-weight:bold;font-style:normal;color:#3a3a3a;letter-spacing:0.718px;">Date of Service</div>
<div class="t" style="left:824.40px;top:424.03px;font-size:14.5px;line-height:14.5px;font-family:'Liberation Sans',sans-serif;font-weight:normal;font-style:normal;color:#444;letter-spacing:0.934px;">05/30/2023</div>
<div class="t" style="left:576.90px;top:446.25px;font-size:14px;line-height:14px;font-family:'Liberation Sans',sans-serif;font-weight:bold;font-style:normal;color:#3a3a3a;letter-spacing:0.689px;">Status</div>
<div class="t" style="left:737.50px;top:445.83px;font-size:14.5px;line-height:14.5px;font-family:'Liberation Sans',sans-serif;font-weight:normal;font-style:normal;color:#444;letter-spacing:0.675px;">Processed - 07/06/2023</div>
<div class="t" style="left:576.40px;top:507.96px;font-size:18px;line-height:18px;font-family:'Liberation Sans',sans-serif;font-weight:normal;font-style:normal;color:#444;letter-spacing:0.839px;">Payment Overview</div>
<div class="a" style="left:560px;top:527px;width:362px;height:1.5px;background:#dedede"></div>
<svg class="a" style="left:661px;top:546px;" width="162" height="162" viewBox="0 0 162 162"><path d="M81 6.7 A74.3 74.3 0 0 0 81 155.3" fill="none" stroke="#1196dc" stroke-width="9"/><path d="M81 6.7 A74.3 74.3 0 0 1 81 155.3" fill="none" stroke="#0a4fb1" stroke-width="9"/></svg>
<div class="t" style="left:681.50px;top:610.90px;font-size:13px;line-height:13px;font-family:'Liberation Sans',sans-serif;font-weight:normal;font-style:normal;color:#444;letter-spacing:0.316px;">Provider Billed Plan</div>
<div class="t" style="left:693.40px;top:628.58px;font-size:22px;line-height:22px;font-family:'Liberation Serif',serif;font-weight:bold;font-style:normal;color:#2a2a2a;letter-spacing:0.956px;">$1,336.00</div>
<div class="t" style="left:613.70px;top:736.65px;font-size:14px;line-height:14px;font-family:'Liberation Sans',sans-serif;font-weight:bold;font-style:normal;color:#3a3a3a;letter-spacing:0.567px;">Provider Billed Plan</div>
<div class="t" style="left:830.00px;top:738.70px;font-size:13px;line-height:13px;font-family:'Liberation Sans',sans-serif;font-weight:normal;font-style:normal;color:#444;letter-spacing:0.416px;">$1,336.00</div>
<div class="a" style="left:762px;top:746px;width:59px;height:4px;background-image:radial-gradient(circle,#666 0.8px,transparent 1.1px);background-size:3.6px 4px"></div>
<div class="a" style="left:591px;top:773.0px;width:14.5px;height:14.5px;background:#0a4aa8;border-radius:50%"></div>
<div class="t" style="left:613.70px;top:773.65px;font-size:14px;line-height:14px;font-family:'Liberation Sans',sans-serif;font-weight:bold;font-style:normal;color:#3a3a3a;letter-spacing:0.768px;">Total Cost (Allowed Amount)</div>
<div class="t" style="left:839.40px;top:775.30px;font-size:13px;line-height:13px;font-family:'Liberation Sans',sans-serif;font-weight:normal;font-style:normal;color:#444;letter-spacing:0.741px;">$588.00</div>
<div class="a" style="left:829px;top:783.0px;width:4px;height:4px;background-image:radial-gradient(circle,#666 0.8px,transparent 1.1px);background-size:3.6px 4px"></div>
<div class="a" style="left:591px;top:810.4px;width:14.5px;height:14.5px;background:#1a9bdc;border-radius:50%"></div>
<div class="t" style="left:613.70px;top:811.05px;font-size:14px;line-height:14px;font-family:'Liberation Sans',sans-serif;font-weight:bold;font-style:normal;color:#3a3a3a;letter-spacing:0.454px;">Plan Paid</div>
<div class="t" style="left:839.40px;top:812.70px;font-size:13px;line-height:13px;font-family:'Liberation Sans',sans-serif;font-weight:normal;font-style:normal;color:#444;letter-spacing:0.741px;">$588.00</div>
<div class="a" style="left:686px;top:820.4px;width:145px;height:4px;background-image:radial-gradient(circle,#666 0.8px,transparent 1.1px);background-size:3.6px 4px"></div>
<div class="a" style="left:591px;top:847.4px;width:14.5px;height:14.5px;background:#e8485c;border-radius:50%"></div>
<div class="t" style="left:613.70px;top:848.05px;font-size:14px;line-height:14px;font-family:'Liberation Sans',sans-serif;font-weight:bold;font-style:normal;color:#3a3a3a;letter-spacing:0.574px;">Your Share</div>
<div class="t" style="left:856.00px;top:849.70px;font-size:13px;line-height:13px;font-family:'Liberation Sans',sans-serif;font-weight:normal;font-style:normal;color:#444;letter-spacing:0.611px;">$0.00</div>
<div class="a" style="left:699px;top:857.4px;width:152px;height:4px;background-image:radial-gradient(circle,#666 0.8px,transparent 1.1px);background-size:3.6px 4px"></div>
<div class="a" style="left:677px;top:909.3px;width:129px;height:5.6px;background:#000;border-radius:3px"></div>
<div class="t" style="left:561.70px;top:926.08px;font-size:15.5px;line-height:15.5px;font-family:'Liberation Sans',sans-serif;font-weight:normal;font-style:normal;color:#111;letter-spacing:-0.051px;-webkit-text-stroke:0.25px #111;">This is a receipt and proof that my insurance has been billed and I am in the process of getting</div>
<div class="t" style="left:561.70px;top:945.58px;font-size:15.5px;line-height:15.5px;font-family:'Liberation Sans',sans-serif;font-weight:normal;font-style:normal;color:#111;letter-spacing:0.129px;-webkit-text-stroke:0.25px #111;">more receipts from them.</div>
<div class="t" style="left:116.10px;top:982.00px;font-size:13px;line-height:13px;font-family:'Liberation Sans',sans-serif;font-weight:normal;font-style:normal;color:#5f5f5f;letter-spacing:0.189px;">Page 1 of 3</div>
<div class="t" style="left:208.40px;top:982.00px;font-size:13px;line-height:13px;font-family:'Liberation Sans',sans-serif;font-weight:normal;font-style:normal;color:#5f5f5f;letter-spacing:0.567px;">49 words</div>
<svg class="a" style="left:287px;top:980px;" width="19" height="16" viewBox="0 0 19 16"><path d="M1.5 1.5 H7 C8.5 1.5 9 2.5 9 3.5 V14 C9 13 8.5 12.3 7 12.3 H1.5 Z M9 3.5 C9 2.5 9.5 1.5 11 1.5 H12" fill="none" stroke="#777" stroke-width="1.2"/><path d="M11 6 L13 9 L17.5 2" fill="none" stroke="#777" stroke-width="1.3"/><path d="M9 12 V15" stroke="#777" stroke-width="1.2"/></svg>
<div class="t" style="left:326.50px;top:982.00px;font-size:13px;line-height:13px;font-family:'Liberation Sans',sans-serif;font-weight:normal;font-style:normal;color:#5f5f5f;letter-spacing:0.427px;">English (United States)</div>
<svg class="a" style="left:1220px;top:980px;" width="19" height="15" viewBox="0 0 19 15"><rect x="1.2" y="1.2" width="16" height="12" rx="1.5" fill="none" stroke="#777" stroke-width="1.3"/><path d="M4 6 V4 H6.5 M12 4 H14.5 V6 M14.5 8.5 V10.5 H12 M6.5 10.5 H4 V8.5" fill="none" stroke="#777" stroke-width="1.2"/></svg>
<div class="t" style="left:1245.90px;top:982.00px;font-size:13px;line-height:13px;font-family:'Liberation Sans',sans-serif;font-weight:normal;font-style:normal;color:#5f5f5f;letter-spacing:0.219px;">Focus</div>
<div class="a" style="left:1295px;top:976px;width:40px;height:24px;background:#b3b3b3"></div>
<svg class="a" style="left:1307px;top:979px;" width="17" height="17" viewBox="0 0 17 17"><rect x="1" y="1" width="15" height="15" rx="1.5" fill="#e6e6e6" stroke="#f4f4f4" stroke-width="1"/><path d="M3 4 H14 M3 6.5 H14 M3 9 H14 M3 11.5 H14 M3 14 H14" stroke="#b5b5b5" stroke-width="0.9"/></svg>
<svg class="a" style="left:1345px;top:979px;" width="20" height="18" viewBox="0 0 20 18"><rect x="1" y="1" width="13" height="12" fill="none" stroke="#777" stroke-width="1.2"/><path d="M3 4 H12 M3 6.5 H10 M3 9 H9" stroke="#777" stroke-width="1"/><circle cx="14.5" cy="12.5" r="4.5" fill="#7a7a7a" stroke="#e0e0e0" stroke-width="0.8"/></svg>
<svg class="a" style="left:1386px;top:980px;" width="18" height="15" viewBox="0 0 18 15"><path d="M1 2 H3 M6 2 H16 M4 6 H6 M8.5 6 H16 M4 10 H6 M8.5 10 H16 M1 14 H3 M6 14 H14" stroke="#7a7a7a" stroke-width="1.5"/></svg>
<svg class="a" style="left:1426px;top:980px;" width="17" height="15" viewBox="0 0 17 15"><path d="M1 2 H16 M1 5.5 H13 M1 9 H16 M1 12.5 H13" stroke="#7a7a7a" stroke-width="1.6"/></svg>
<div class="a" style="left:1463.5px;top:986.3px;width:9px;height:2.2px;background:#6f6f6f"></div>
<div class="a" style="left:1480px;top:985.5px;width:110px;height:4px;background:#9e9e9e;border-radius:2px"></div>
<div class="a" style="left:1533px;top:981.5px;width:12px;height:12px;background:#fff;border-radius:50%;box-shadow:0 0.5px 1px rgba(0,0,0,0.3)"></div>
<div class="a" style="left:1599px;top:986.3px;width:9.2px;height:2.2px;background:#6f6f6f"></div>
<div class="a" style="left:1602.5px;top:983px;width:2.2px;height:9px;background:#6f6f6f"></div>
<div class="t" style="left:1627.20px;top:981.50px;font-size:13px;line-height:13px;font-family:'Liberation Sans',sans-serif;font-weight:normal;font-style:normal;color:#5f5f5f;letter-spacing:0.109px;">126%</div>
<div class="a" style="left:1512px;top:930px;width:184px;height:54px;opacity:0.75;overflow:hidden"><svg class="a" style="left:4px;top:5px" width="36" height="46" viewBox="0 0 36 46"><path d="M3 5 C10 4 17 2 17 2 C17 2 24 4 31 5 V24 C31 34 24 40 17 43 C10 40 3 34 3 24 Z" fill="none" stroke="#f8f8f8" stroke-width="3"/><path d="M6 7 H17 V23 H6 Z M17 23 H29 V30 C28 35 23 39 17 41 Z" fill="#f3f3f3"/></svg><div class="t" style="left:46.50px;top:4.26px;font-size:24.5px;line-height:24.5px;font-family:'Liberation Sans',sans-serif;font-weight:normal;font-style:normal;color:#f8f8f8;letter-spacing:1.572px;-webkit-text-stroke:1.2px #f8f8f8;">COMPLAINTS</div><div class="t" style="left:46.50px;top:22.26px;font-size:24.5px;line-height:24.5px;font-family:'Liberation Sans',sans-serif;font-weight:normal;font-style:normal;color:#f8f8f8;letter-spacing:0.975px;-webkit-text-stroke:1.2px #f8f8f8;">BOARD</div></div>
<div class="a" style="left:1696px;top:936px;width:32px;height:48px;background:#fff"></div>
<div class="a" style="left:1696px;top:944px;width:8px;height:8px;background:#000"></div>
</div></body></html>
